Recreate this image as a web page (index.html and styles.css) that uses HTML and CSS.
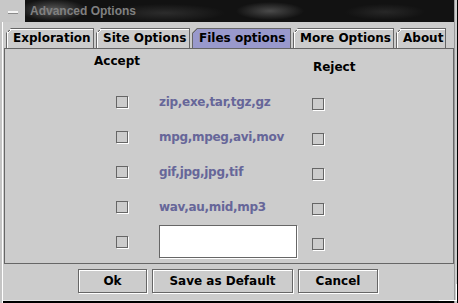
FILE: index.html
```html
<!DOCTYPE html>
<html>
<head>
<meta charset="utf-8">
<title>Advanced Options</title>
<link rel="stylesheet" href="styles.css">
</head>
<body>
<div class="window">
  <div class="titlebar">
    <div class="sysmenu"><span class="sysmenu-bar"></span></div>
    <div class="title">Advanced Options</div>
  </div>
  <div class="tabs">
    <div class="tab tab-exploration">Exploration</div>
    <div class="tab tab-site">Site Options</div>
    <div class="tab tab-files tab-selected">Files options</div>
    <div class="tab tab-more">More Options</div>
    <div class="tab tab-about">About</div>
  </div>
  <div class="panel">
    <div class="panel-head">
      <span class="head-accept">Accept</span>
      <span class="head-reject">Reject</span>
    </div>
    <div class="row"><span class="check"></span><span class="ext">zip,exe,tar,tgz,gz</span><span class="check check-reject"></span></div>
    <div class="row"><span class="check"></span><span class="ext">mpg,mpeg,avi,mov</span><span class="check check-reject"></span></div>
    <div class="row"><span class="check"></span><span class="ext">gif,jpg,jpg,tif</span><span class="check check-reject"></span></div>
    <div class="row"><span class="check"></span><span class="ext">wav,au,mid,mp3</span><span class="check check-reject"></span></div>
    <div class="row"><span class="check"></span><span class="ext"><span class="field"></span></span><span class="check check-reject"></span></div>
  </div>
  <div class="buttons">
    <div class="btn btn-ok">Ok</div>
    <div class="btn btn-save">Save as Default</div>
    <div class="btn btn-cancel">Cancel</div>
  </div>
  <div class="grip"></div>
</div>
</body>
</html>
```
FILE: styles.css
```css
html, body {
  margin: 0;
  padding: 0;
}
body {
  width: 458px;
  height: 303px;
  overflow: hidden;
  background: #cccccc;
  font-family: "DejaVu Sans", "Liberation Sans", sans-serif;
  font-weight: bold;
  font-size: 12px;
  color: #000;
}
.window {
  position: relative;
  width: 458px;
  height: 303px;
  box-sizing: border-box;
  background: #cccccc;
  display: flex;
  flex-direction: column;
  box-shadow:
    inset 2px 0 0 #c4c4c4,
    inset 3px 0 0 #ffffff,
    inset -1px 0 0 #000000,
    inset -3px 0 0 #cccccc,
    inset -4px 0 0 #999999,
    inset 0 -2px 0 #000000,
    inset 0 -3px 0 #e6e6e6;
}
.titlebar {
  display: flex;
  height: 22px;
  width: 454px;
}
.sysmenu {
  width: 25px;
  height: 22px;
  background: #c8c8c8;
  display: flex;
  align-items: center;
}
.sysmenu-bar {
  display: block;
  width: 10px;
  height: 2px;
  margin: 1px 0 0 8px;
  background: #f4f4f4;
  box-shadow: 0 1px 0 #8a8a8a;
}
.title {
  flex: 1;
  height: 22px;
  line-height: 22px;
  padding-left: 5px;
  color: #808080;
  font-family: "Liberation Sans", sans-serif;
  font-size: 12px;
  font-weight: bold;
  background:
    radial-gradient(ellipse 34px 11px at 28px 10px, rgba(140,140,140,0.6), rgba(140,140,140,0) 100%),
    radial-gradient(ellipse 34px 9px at 245px 11px, rgba(130,130,130,0.5), rgba(130,130,130,0) 100%),
    radial-gradient(ellipse 60px 9px at 140px 13px, rgba(70,70,70,0.5), rgba(70,70,70,0) 100%),
    radial-gradient(ellipse 40px 8px at 360px 12px, rgba(60,60,60,0.5), rgba(60,60,60,0) 100%),
    #121212;
}
.tabs {
  display: flex;
  gap: 2px;
  margin-top: 6px;
  padding-left: 6px;
  height: 20px;
}
.tab {
  --tab-bg: #cccccc;
  box-sizing: border-box;
  height: 20px;
  line-height: 18px;
  padding-left: 6px;
  border: 1px solid #666666;
  border-bottom: none;
  box-shadow: inset 1px 1px 0 #ffffff;
  background: linear-gradient(135deg, transparent 3.2px, #666666 3.2px, #666666 4.4px, #ffffff 4.4px, #ffffff 5.4px, var(--tab-bg) 5.4px);
  background-origin: border-box;
  clip-path: polygon(5px 0, 100% 0, 100% 100%, 0 100%, 0 5px);
  white-space: nowrap;
}
.tab-selected {
  --tab-bg: #9999cc;
  box-shadow: none;
  background: linear-gradient(135deg, transparent 3.2px, #666666 3.2px, #666666 4.4px, var(--tab-bg) 4.4px);
  background-origin: border-box;
}
.tab-exploration { width: 88px; }
.tab-site { width: 94px; }
.tab-files { width: 99px; }
.tab-more { width: 101px; }
.tab-about { width: 50px; }
.panel {
  box-sizing: border-box;
  margin-left: 4px;
  width: 450px;
  height: 216px;
  border: 1px solid #666666;
}
.panel-head {
  display: flex;
  align-items: flex-start;
  height: 35px;
}
.head-accept {
  margin: 5px 0 0 89px;
  line-height: 14px;
}
.head-reject {
  margin: 11px 0 0 173px;
  line-height: 14px;
}
.row {
  display: grid;
  grid-template-columns: 12px 184px 13px;
  align-items: center;
  height: 35px;
  padding-left: 111px;
}
.check {
  display: block;
  box-sizing: border-box;
  width: 12px;
  height: 12px;
  border: 1px solid #666666;
  box-shadow: 1px 1px 0 #ffffff;
}
.check-reject {
  margin-top: 4px;
}
.ext {
  display: flex;
  align-items: center;
  padding-left: 31px;
  color: #666699;
  letter-spacing: -0.3px;
  line-height: 14px;
  white-space: nowrap;
}
.field {
  display: block;
  box-sizing: border-box;
  width: 138px;
  height: 33px;
  background: #ffffff;
  border: 1px solid #666666;
  box-shadow: 1px 1px 0 #ffffff;
}
.buttons {
  display: flex;
  justify-content: center;
  gap: 5px;
  margin-top: 5px;
  padding-right: 2px;
}
.btn {
  box-sizing: border-box;
  height: 24px;
  line-height: 22px;
  text-align: center;
  border: 1px solid #666666;
  box-shadow: inset 1px 1px 0 #ffffff, 1px 1px 0 #ffffff;
}
.btn-ok { width: 69px; }
.btn-save { width: 141px; }
.btn-cancel { width: 80px; }
.grip {
  position: absolute;
  right: 1px;
  bottom: 2px;
  width: 18px;
  height: 17px;
  border-right: 1px solid #ffffff;
  border-bottom: 1px solid #ffffff;
  box-sizing: border-box;
}
```
